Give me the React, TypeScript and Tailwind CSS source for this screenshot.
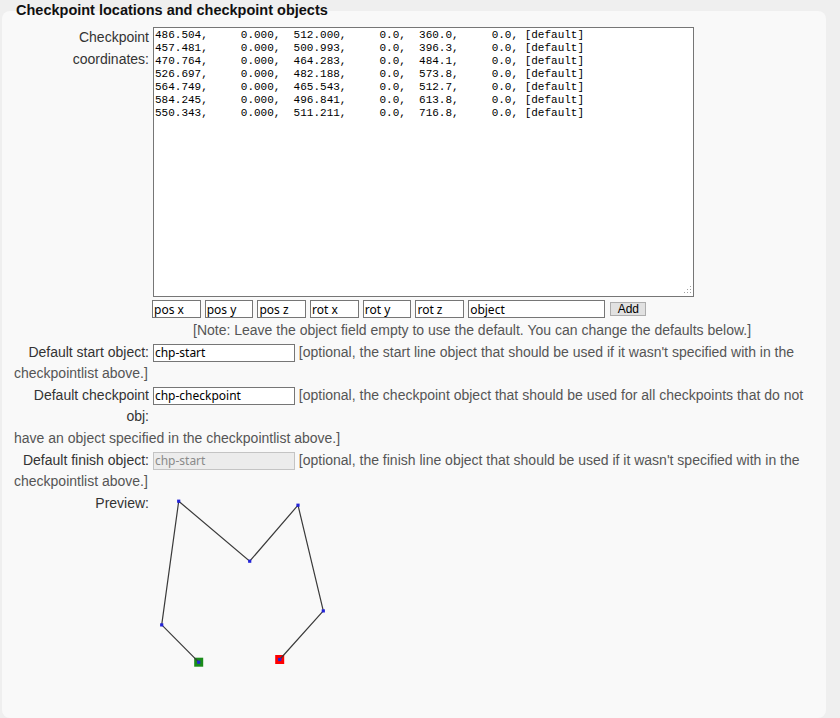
import React from 'react';

const coords = [
  '486.504,     0.000,  512.000,     0.0,  360.0,     0.0, [default]',
  '457.481,     0.000,  500.993,     0.0,  396.3,     0.0, [default]',
  '470.764,     0.000,  464.283,     0.0,  484.1,     0.0, [default]',
  '526.697,     0.000,  482.188,     0.0,  573.8,     0.0, [default]',
  '564.749,     0.000,  465.543,     0.0,  512.7,     0.0, [default]',
  '584.245,     0.000,  496.841,     0.0,  613.8,     0.0, [default]',
  '550.343,     0.000,  511.211,     0.0,  716.8,     0.0, [default]',
].join('\n');

// preview points, in the order of the checkpoint list
const points: [number, number][] = [
  [45.7, 169.2],
  [8.7, 131.9],
  [25.7, 8.2],
  [96.7, 68.2],
  [145, 12.2],
  [170.3, 117.9],
  [126.7, 166.5],
];

const fieldCls =
  "h-[18px] border border-[#767676] bg-white px-[1px] font-['Noto_Sans',sans-serif] text-[12px] leading-none text-black outline-none";

const smallFields = ['pos x', 'pos y', 'pos z', 'rot x', 'rot y', 'rot z'];

const Preview: React.FC = () => {
  const start = points[0];
  const end = points[points.length - 1];
  return (
    <svg width="180" height="176" className="ml-[4px] shrink-0">
      <rect x={start[0] - 4.5} y={start[1] - 4.5} width="9" height="9" fill="#1a8c1a" />
      <rect x={end[0] - 4.5} y={end[1] - 4.5} width="9" height="9" fill="#ff0000" />
      <polyline
        points={points.map((p) => p.join(',')).join(' ')}
        fill="none"
        stroke="#3a3a3a"
        strokeWidth="1.2"
      />
      {points.map((p, i) => (
        <rect key={i} x={p[0] - 1.6} y={p[1] - 1.6} width="3.2" height="3.2" fill="#2424d8" />
      ))}
    </svg>
  );
};

const App: React.FC = () => {
  return (
    <div className="min-h-screen bg-[#efefef] pt-[1px] font-['Liberation_Sans',Arial,sans-serif]">
      <div className="relative z-10 h-[18px] pl-[16px] text-[14.5px] font-bold leading-[18px] text-[#111]">
        Checkpoint locations and checkpoint objects
      </div>

      <div className="-mt-[8px] ml-[2px] w-[824px] rounded-[8px] bg-[#f9f9f9] pb-[49px] pl-[12px] pr-[8px] pt-[16px] text-[14px] leading-[21.6px]">
        {/* coordinates */}
        <div className="flex items-start">
          <span className="w-[135px] shrink-0 text-right text-[#333]">
            Checkpoint coordinates:
          </span>
          <div className="relative ml-[4px]">
            <textarea
              defaultValue={coords}
              spellCheck={false}
              className="block h-[270px] w-[541px] resize-none overflow-hidden whitespace-pre border border-[#767676] bg-white p-[1px] font-['Liberation_Mono',monospace] text-[11px] leading-[13px] text-black outline-none"
            />
            <svg width="8" height="8" className="absolute bottom-[3px] right-[2px]">
              <rect x="6" y="0" width="1" height="1" fill="#a0a0a0" />
              <rect x="3" y="3" width="1" height="1" fill="#a0a0a0" />
              <rect x="6" y="3" width="1" height="1" fill="#a0a0a0" />
              <rect x="0" y="6" width="1" height="1" fill="#a0a0a0" />
              <rect x="3" y="6" width="1" height="1" fill="#a0a0a0" />
              <rect x="6" y="6" width="1" height="1" fill="#a0a0a0" />
            </svg>
          </div>
        </div>

        {/* new checkpoint fields */}
        <div className="ml-[138px] mt-[3px] flex h-[18px] items-center gap-[4.2px]">
          {smallFields.map((f) => (
            <input key={f} defaultValue={f} className={`${fieldCls} w-[48.5px]`} />
          ))}
          <input defaultValue="object" className={`${fieldCls} w-[137px]`} />
          <button className="ml-[1px] h-[14px] w-[36px] border border-[#adadad] bg-[#e1e1e1] text-[12px] leading-[12px] text-black">
            Add
          </button>
        </div>

        <div className="mt-[2px] pl-[179px] text-[#555]">
          [Note: Leave the object field empty to use the default. You can change the defaults below.]
        </div>

        <div className="text-[#555]">
          <span className="inline-block w-[135px] text-right align-top text-[#333]">
            Default start object:
          </span>{' '}
          <input defaultValue="chp-start" className={`${fieldCls} mt-[2px] inline-block w-[142px] align-top`} />{' '}
          [optional, the start line object that should be used if it wasn't specified with in the
          checkpointlist above.]
        </div>

        <div className="text-[#555]">
          <span className="inline-block w-[135px] text-right align-top text-[#333]">
            Default checkpoint obj:
          </span>{' '}
          <input defaultValue="chp-checkpoint" className={`${fieldCls} mt-[2px] inline-block w-[142px] align-top`} />{' '}
          [optional, the checkpoint object that should be used for all checkpoints that do not
          have an object specified in the checkpointlist above.]
        </div>

        <div className="text-[#555]">
          <span className="inline-block w-[135px] text-right align-top text-[#333]">
            Default finish object:
          </span>{' '}
          <input
            defaultValue="chp-start"
            disabled
            className="mt-[2px] inline-block h-[18px] w-[142px] border border-[#c4c4c4] bg-[#ececec] px-[1px] align-top font-['Noto_Sans',sans-serif] text-[12px] leading-none text-[#8a8a8a]"
          />{' '}
          [optional, the finish line object that should be used if it wasn't specified with in the
          checkpointlist above.]
        </div>

        <div className="flex items-start">
          <span className="w-[135px] shrink-0 text-right text-[#333]">Preview:</span>
          <Preview />
        </div>
      </div>
    </div>
  );
};

export default App;
